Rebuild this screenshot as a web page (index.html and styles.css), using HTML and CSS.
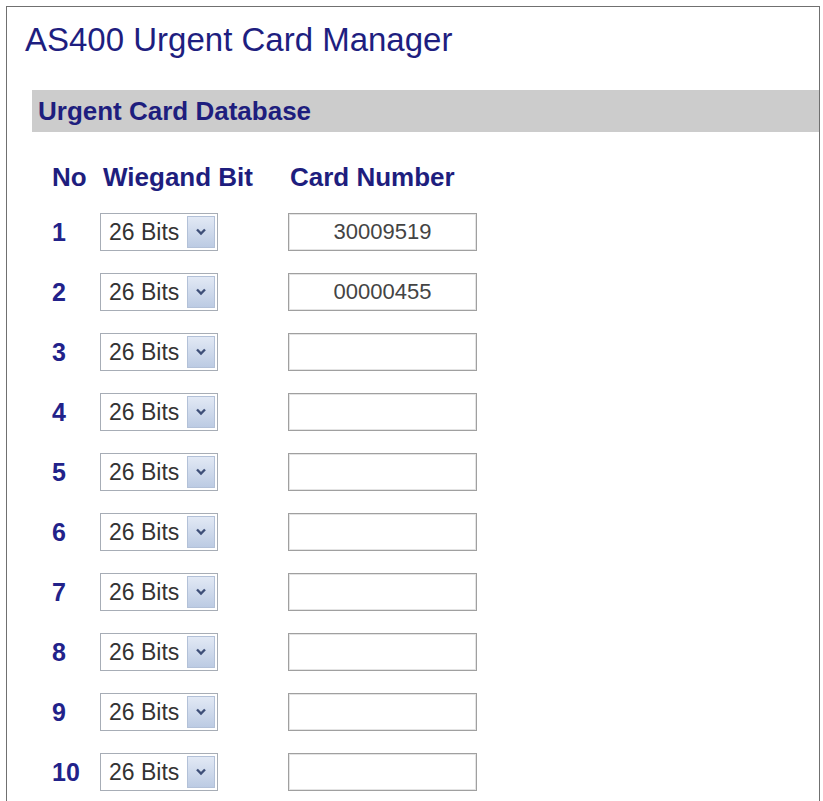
FILE: index.html
```html
<!DOCTYPE html>
<html>
<head>
<meta charset="utf-8">
<title>AS400 Urgent Card Manager</title>
<link rel="stylesheet" href="styles.css">
</head>
<body>
<div class="frame">
  <h1 class="title">AS400 Urgent Card Manager</h1>
  <div class="bar">Urgent Card Database</div>
  <div class="grid">
    <div class="hd">No</div>
    <div class="hd pad">Wiegand Bit</div>
    <div class="hd pad2">Card Number</div>
  </div>
  <div class="rows">
    <div class="row"><div class="no">1</div><div class="sel"><span class="val">26 Bits</span><span class="btn"><svg width="12" height="8" viewBox="0 0 12 8"><path d="M2 1.5 L6 5.5 L10 1.5" fill="none" stroke="#3e4f78" stroke-width="2.4"/></svg></span></div><div class="inp">30009519</div></div>
    <div class="row"><div class="no">2</div><div class="sel"><span class="val">26 Bits</span><span class="btn"><svg width="12" height="8" viewBox="0 0 12 8"><path d="M2 1.5 L6 5.5 L10 1.5" fill="none" stroke="#3e4f78" stroke-width="2.4"/></svg></span></div><div class="inp">00000455</div></div>
    <div class="row"><div class="no">3</div><div class="sel"><span class="val">26 Bits</span><span class="btn"><svg width="12" height="8" viewBox="0 0 12 8"><path d="M2 1.5 L6 5.5 L10 1.5" fill="none" stroke="#3e4f78" stroke-width="2.4"/></svg></span></div><div class="inp"></div></div>
    <div class="row"><div class="no">4</div><div class="sel"><span class="val">26 Bits</span><span class="btn"><svg width="12" height="8" viewBox="0 0 12 8"><path d="M2 1.5 L6 5.5 L10 1.5" fill="none" stroke="#3e4f78" stroke-width="2.4"/></svg></span></div><div class="inp"></div></div>
    <div class="row"><div class="no">5</div><div class="sel"><span class="val">26 Bits</span><span class="btn"><svg width="12" height="8" viewBox="0 0 12 8"><path d="M2 1.5 L6 5.5 L10 1.5" fill="none" stroke="#3e4f78" stroke-width="2.4"/></svg></span></div><div class="inp"></div></div>
    <div class="row"><div class="no">6</div><div class="sel"><span class="val">26 Bits</span><span class="btn"><svg width="12" height="8" viewBox="0 0 12 8"><path d="M2 1.5 L6 5.5 L10 1.5" fill="none" stroke="#3e4f78" stroke-width="2.4"/></svg></span></div><div class="inp"></div></div>
    <div class="row"><div class="no">7</div><div class="sel"><span class="val">26 Bits</span><span class="btn"><svg width="12" height="8" viewBox="0 0 12 8"><path d="M2 1.5 L6 5.5 L10 1.5" fill="none" stroke="#3e4f78" stroke-width="2.4"/></svg></span></div><div class="inp"></div></div>
    <div class="row"><div class="no">8</div><div class="sel"><span class="val">26 Bits</span><span class="btn"><svg width="12" height="8" viewBox="0 0 12 8"><path d="M2 1.5 L6 5.5 L10 1.5" fill="none" stroke="#3e4f78" stroke-width="2.4"/></svg></span></div><div class="inp"></div></div>
    <div class="row"><div class="no">9</div><div class="sel"><span class="val">26 Bits</span><span class="btn"><svg width="12" height="8" viewBox="0 0 12 8"><path d="M2 1.5 L6 5.5 L10 1.5" fill="none" stroke="#3e4f78" stroke-width="2.4"/></svg></span></div><div class="inp"></div></div>
    <div class="row"><div class="no">10</div><div class="sel"><span class="val">26 Bits</span><span class="btn"><svg width="12" height="8" viewBox="0 0 12 8"><path d="M2 1.5 L6 5.5 L10 1.5" fill="none" stroke="#3e4f78" stroke-width="2.4"/></svg></span></div><div class="inp"></div></div>
  </div>
</div>
</body>
</html>
```
FILE: styles.css
```css
html, body {
  margin: 0;
  padding: 0;
  background: #ffffff;
  overflow: hidden;
}
body {
  font-family: "Liberation Sans", Arial, sans-serif;
}
.frame {
  margin: 6px 3px 0 6px;
  border: 1px solid #707070;
  border-bottom: 0;
  height: 900px;
}
.title {
  margin: 0;
  padding: 14px 0 0 18px;
  height: 70px;
  box-sizing: border-box;
  font-size: 33px;
  line-height: 37px;
  font-weight: normal;
  color: #1e1e80;
}
.bar {
  margin: 13px 0 0 25px;
  height: 42px;
  line-height: 42px;
  padding-left: 6px;
  background: #cccccc;
  font-size: 26px;
  font-weight: bold;
  color: #1e1e7e;
}
.grid {
  display: grid;
  grid-template-columns: 48px 188px 189px;
  margin: 30px 0 0 45px;
}
.hd {
  font-size: 26px;
  line-height: 30px;
  font-weight: bold;
  color: #1e1e7e;
}
.hd.pad { padding-left: 3px; }
.hd.pad2 { padding-left: 2px; }
.rows {
  margin: 10px 0 0 45px;
}
.row {
  display: grid;
  grid-template-columns: 48px 188px 189px;
  align-items: center;
  height: 60px;
}
.no {
  font-size: 25px;
  font-weight: bold;
  color: #22228a;
}
.sel {
  width: 118px;
  height: 38px;
  box-sizing: border-box;
  border: 1px solid #a7adb6;
  background: #fff;
  display: flex;
  align-items: stretch;
  padding: 2px;
}
.val {
  flex: 1;
  font-size: 23px;
  line-height: 32px;
  color: #333333;
  padding-left: 6px;
}
.btn {
  width: 28px;
  box-sizing: border-box;
  border: 1px solid #b3c1d8;
  background: linear-gradient(#e2e9f5, #bccbe3);
  display: flex;
  align-items: center;
  justify-content: center;
}
.inp {
  width: 189px;
  height: 38px;
  box-sizing: border-box;
  border: 1px solid #a0a0a0;
  box-shadow: inset 0 0 0 1px #e4e4e4;
  text-align: center;
  font-size: 22px;
  line-height: 36px;
  color: #444444;
}
```
